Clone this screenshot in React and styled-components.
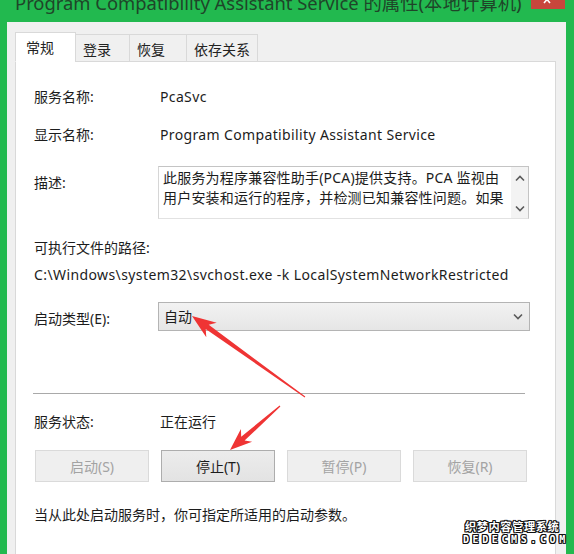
import React from 'react';
import styled, { createGlobalStyle } from 'styled-components';

const GlobalStyle = createGlobalStyle`
  html, body {
    margin: 0;
    padding: 0;
    background: #22b94f;
  }
  body {
    font-family: "Noto Sans", "Noto Sans CJK SC", sans-serif;
    color: #1c1c1c;
  }
`;

const TABS = [
  { label: '常规', w: 61, active: true },
  { label: '登录', w: 55 },
  { label: '恢复', w: 58 },
  { label: '依存关系', w: 72 },
];

const BUTTONS = [
  { label: '启动(S)', enabled: false },
  { label: '停止(T)', enabled: true },
  { label: '暂停(P)', enabled: false },
  { label: '恢复(R)', enabled: false },
];

// arrow drawn as a tapered shaft with a pointed head
const arrowPoints = (x1, y1, x2, y2, head = 22, hw = 8, sw = 2.4) => {
  const dx = x2 - x1;
  const dy = y2 - y1;
  const len = Math.hypot(dx, dy);
  const ux = dx / len;
  const uy = dy / len;
  const nx = -uy;
  const ny = ux;
  const bx = x2 - ux * head;
  const by = y2 - uy * head;
  const kx = x2 - ux * head * 0.78;
  const ky = y2 - uy * head * 0.78;
  const pts = [
    [x1 + nx * 0.6, y1 + ny * 0.6],
    [kx + nx * sw, ky + ny * sw],
    [bx + nx * hw, by + ny * hw],
    [x2, y2],
    [bx - nx * hw, by - ny * hw],
    [kx - nx * sw, ky - ny * sw],
    [x1 - nx * 0.6, y1 - ny * 0.6],
  ];
  return pts.map((p) => p.map((v) => v.toFixed(1)).join(',')).join(' ');
};

const Chevron = ({ up }) => (
  <svg width="10" height="7" viewBox="0 0 10 7">
    <path
      d={up ? 'M1 5.5 L5 1.5 L9 5.5' : 'M1 1.5 L5 5.5 L9 1.5'}
      fill="none"
      stroke="#5a5a5a"
      strokeWidth="1.6"
    />
  </svg>
);

export default function App() {
  return (
    <>
      <GlobalStyle />
      <Frame>
        <TitleBar>
          <Title>Program Compatibility Assistant Service 的属性(本地计算机)</Title>
          <CloseButton>
            <svg width="34" height="9" viewBox="0 0 34 9">
              <path d="M13 -4 L19 3 M19 -4 L13 3" stroke="#fff" strokeWidth="1.6" />
            </svg>
          </CloseButton>
        </TitleBar>

        <Window>
          <TabRow>
            {TABS.map((t) => (
              <Tab key={t.label} $w={t.w} $active={t.active}>
                {t.label}
              </Tab>
            ))}
          </TabRow>

          <Panel>
            <Field $mt={0}>
              <Label>服务名称:</Label>
              <Value $latin>PcaSvc</Value>
            </Field>
            <Field $mt={18}>
              <Label>显示名称:</Label>
              <Value $latin>Program Compatibility Assistant Service</Value>
            </Field>
            <Field $mt={21} $top>
              <Label $pt={7}>描述:</Label>
              <TextBox>
                <TextBody>
                  此服务为程序兼容性助手(PCA)提供支持。PCA 监视由
                  <br />
                  用户安装和运行的程序，并检测已知兼容性问题。如果
                </TextBody>
                <ScrollBar>
                  <Chevron up />
                  <Chevron />
                </ScrollBar>
              </TextBox>
            </Field>

            <Line $mt={19}>可执行文件的路径:</Line>
            <Line $mt={7} $latin>
              C:\Windows\system32\svchost.exe -k LocalSystemNetworkRestricted
            </Line>

            <Field $mt={17}>
              <Label $pt={4}>启动类型(E):</Label>
              <Select>
                <span>自动</span>
                <Chevron />
              </Select>
            </Field>

            <Separator />

            <Field $mt={18}>
              <Label>服务状态:</Label>
              <Value>正在运行</Value>
            </Field>

            <ButtonRow>
              {BUTTONS.map((b) => (
                <Button key={b.label} $enabled={b.enabled}>
                  {b.label}
                </Button>
              ))}
            </ButtonRow>

            <Line $mt={23}>当从此处启动服务时，你可指定所适用的启动参数。</Line>
          </Panel>
        </Window>

        <Overlay width="574" height="554" viewBox="0 0 574 554">
          <polygon points={arrowPoints(305, 397, 192, 316, 24, 9, 2.6)} fill="#ef3434" />
          <polygon points={arrowPoints(280, 406, 230, 450, 22, 8.5, 2.6)} fill="#ef3434" />
        </Overlay>

        <Watermark>
          <WatermarkCn>织梦内容管理系统</WatermarkCn>
          <WatermarkEn>DEDECMS.COM</WatermarkEn>
        </Watermark>
      </Frame>
    </>
  );
}

const Frame = styled('div')`
  position: relative;
  width: 574px;
  height: 554px;
  overflow: hidden;
  background: #22b94f;
  display: flex;
  flex-direction: column;
  padding: 0 8px 0 7px;
  box-sizing: border-box;
`;

const TitleBar = styled('div')`
  flex: none;
  height: 22px;
  display: flex;
  justify-content: space-between;
  align-items: flex-start;
  overflow: hidden;
`;

const Title = styled('div')`
  margin: -8px 0 0 8px;
  font-size: 18.4px;
  line-height: 22px;
  color: #1f4529;
  white-space: nowrap;
`;

const CloseButton = styled('div')`
  flex: none;
  width: 34px;
  height: 9px;
  margin-right: 1px;
  background: #c8463c;
  display: flex;
`;

const Window = styled('div')`
  flex: 1;
  display: flex;
  flex-direction: column;
  background: #f0f0f0;
  padding: 10px 10px 0 8px;
`;

const TabRow = styled('div')`
  position: relative;
  z-index: 1;
  display: flex;
  align-items: flex-end;
  height: 30px;
  margin-bottom: -1px;
`;

const Tab = styled('div')`
  box-sizing: border-box;
  width: ${(p) => p.$w}px;
  height: ${(p) => (p.$active ? 30 : 28)}px;
  margin-left: ${(p) => (p.$active ? 0 : -1)}px;
  display: flex;
  align-items: center;
  padding: ${(p) => (p.$active ? '0 0 0 10px' : '2px 0 0 7px')};
  border: 1px solid #d9d9d9;
  border-bottom: ${(p) => (p.$active ? '1px solid #ffffff' : '1px solid #d9d9d9')};
  background: ${(p) => (p.$active ? '#ffffff' : '#f0f0f0')};
  font-size: 14px;
  color: #222;
  &:first-child {
    margin-left: 0;
  }
`;

const Panel = styled('div')`
  flex: 1;
  display: flex;
  flex-direction: column;
  background: #ffffff;
  border: 1px solid #d9d9d9;
  border-bottom: none;
  padding: 25px 0 0 18px;
  font-size: 14px;
`;

const Field = styled('div')`
  display: grid;
  grid-template-columns: 124px 1fr;
  align-items: ${(p) => (p.$top ? 'start' : 'center')};
  margin-top: ${(p) => p.$mt}px;
`;

const Label = styled('div')`
  line-height: 20px;
  padding-top: ${(p) => p.$pt || 0}px;
  white-space: nowrap;
`;

const Value = styled('div')`
  line-height: 20px;
  padding-left: 2px;
  white-space: nowrap;
  letter-spacing: ${(p) => (p.$latin ? '0.36px' : 'normal')};
`;

const Line = styled('div')`
  margin-top: ${(p) => p.$mt}px;
  line-height: 20px;
  white-space: nowrap;
  letter-spacing: ${(p) => (p.$latin ? '0.4px' : 'normal')};
`;

const TextBox = styled('div')`
  box-sizing: border-box;
  width: 371px;
  height: 53px;
  display: flex;
  border: 1px solid #c4c4c4;
  border-left-color: #d6d6d6;
  border-bottom-color: #e2e2e2;
`;

const TextBody = styled('div')`
  flex: 1;
  padding: 1px 0 0 4px;
  line-height: 20px;
  white-space: nowrap;
  overflow: hidden;
  letter-spacing: 0.2px;
`;

const ScrollBar = styled('div')`
  width: 17px;
  display: flex;
  flex-direction: column;
  justify-content: space-between;
  align-items: center;
  padding: 8px 0 6px;
  background: #f3f3f3;
`;

const Select = styled('div')`
  box-sizing: border-box;
  width: 372px;
  height: 29px;
  display: flex;
  align-items: center;
  justify-content: space-between;
  padding: 0 6px 0 5px;
  border: 1px solid #b4b4b4;
  background: linear-gradient(#f2f2f2, #e6e6e6);
  line-height: 20px;
`;

const Separator = styled('div')`
  height: 1px;
  margin: 62px 30px 0 -1px;
  background: #a9a9a9;
`;

const ButtonRow = styled('div')`
  display: grid;
  grid-template-columns: repeat(4, 114px);
  column-gap: 12px;
  margin: 18px 0 0 1px;
`;

const Button = styled('div')`
  box-sizing: border-box;
  height: 32px;
  display: flex;
  align-items: center;
  justify-content: center;
  border: 1px solid ${(p) => (p.$enabled ? '#adadad' : '#dadada')};
  background: ${(p) => (p.$enabled ? 'linear-gradient(#ececec, #e3e3e3)' : '#efefef')};
  color: ${(p) => (p.$enabled ? '#1c1c1c' : '#a3a3a3')};
`;

const Overlay = styled('svg')`
  position: absolute;
  top: 0;
  left: 0;
  pointer-events: none;
`;

const Watermark = styled('div')`
  position: absolute;
  left: 463px;
  top: 519px;
  display: flex;
  flex-direction: column;
  align-items: flex-start;
  color: #ffffff;
  font-weight: 700;
  text-shadow: 1px 0 0 #111, -1px 0 0 #111, 0 1px 0 #111, 0 -1px 0 #111,
    1px 1px 0 #111, -1px -1px 0 #111, 1px -1px 0 #111, -1px 1px 0 #111;
`;

const WatermarkCn = styled('div')`
  font-family: "Noto Sans CJK SC", sans-serif;
  font-size: 11.2px;
  line-height: 15px;
  letter-spacing: 0.6px;
  white-space: nowrap;
  padding-left: 2px;
`;

const WatermarkEn = styled('div')`
  font-family: "DejaVu Sans Mono", monospace;
  font-size: 10px;
  line-height: 12px;
  letter-spacing: 3.6px;
  white-space: nowrap;
`;
